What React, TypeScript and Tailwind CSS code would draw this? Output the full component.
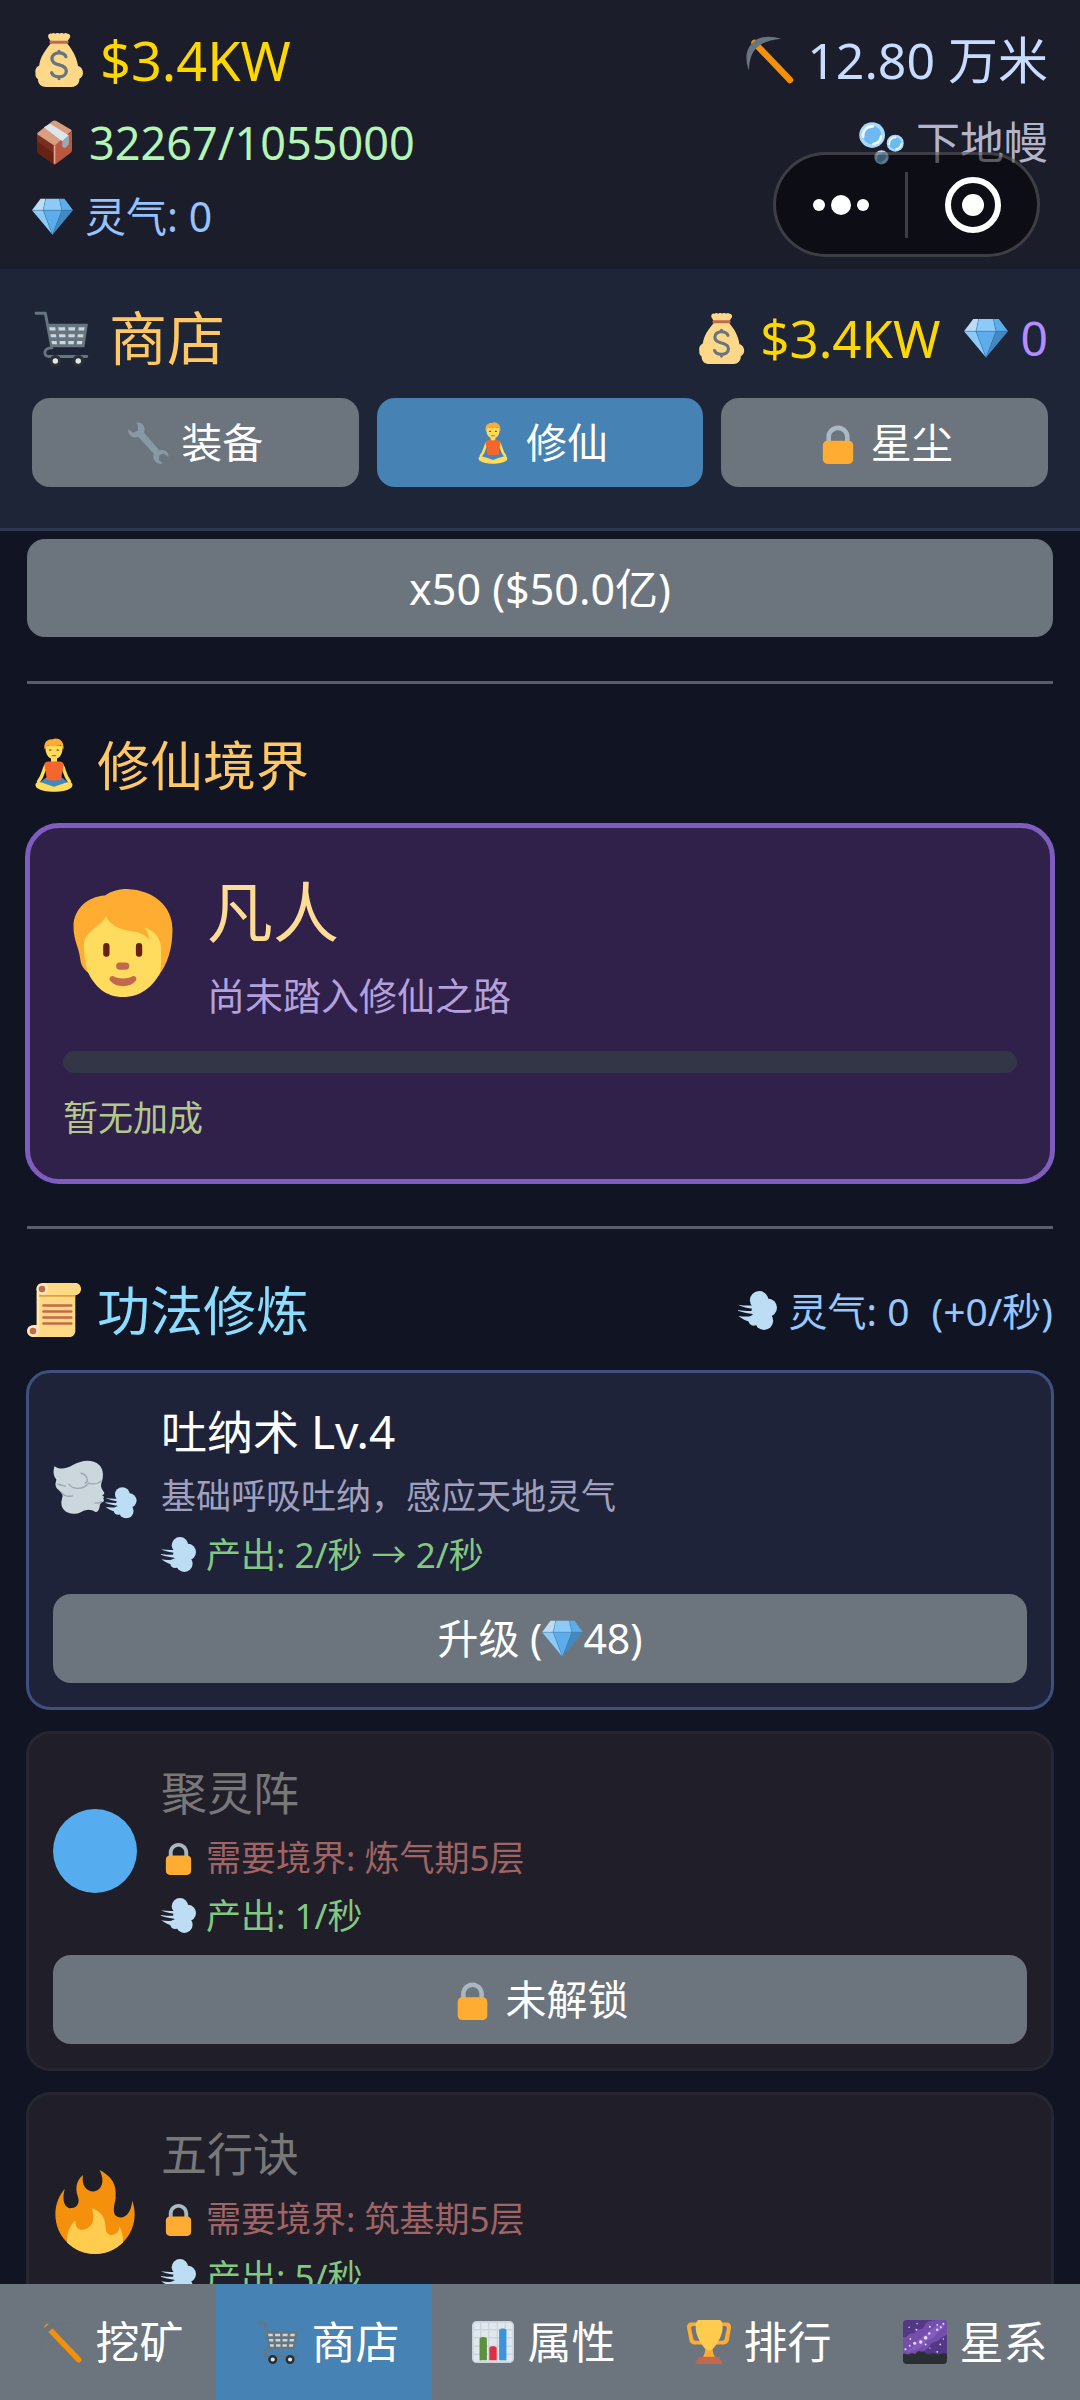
import type { ComponentType, ReactNode } from "react";

type IconProps = { className?: string };

export default function App() {
  return (
    <div className="flex h-screen flex-col bg-[#111523] font-['Noto_Sans','Noto_Sans_CJK_SC',sans-serif] text-white">
      <StatusBar />
      <ShopHeader />

      {/* Scrolling list */}
      <main className="min-h-0 flex-1 overflow-y-auto px-[27px] pt-[8px] [scrollbar-width:none]">
        <button className="h-[98px] w-full rounded-[18px] bg-[#6c757d] text-[43px] leading-none">
          x50 ($50.0亿)
        </button>

        <Divider />

        <section>
          <div className="mb-[20px] flex h-[80px] items-center gap-[16px]">
            <Lotus className="size-[54px]" />
            <h2 className="text-[53px] leading-none text-[#ffc864]">修仙境界</h2>
          </div>
          <RealmCard />
        </section>

        <Divider />

        <section>
          <div className="mb-[20px] flex h-[80px] items-center justify-between">
            <div className="flex items-center gap-[16px]">
              <Scroll className="size-[54px]" />
              <h2 className="text-[53px] leading-none text-[#8cdcff]">功法修炼</h2>
            </div>
            <div className="flex items-center text-[39px] leading-none text-[#96c8ff]">
              <Dash className="mr-[12px] size-[39px]" />
              <span>灵气: 0</span>
              <span className="ml-[22px]">(+0/秒)</span>
            </div>
          </div>
          <div className="-mx-px flex flex-col gap-[21px]">
            <SkillCard
              icon={WindFace}
              name="吐纳术 Lv.4"
              desc="基础呼吸吐纳，感应天地灵气"
              output="产出: 2/秒 → 2/秒"
            >
              升级 (<Gem className="size-[41px]" />48)
            </SkillCard>
            <SkillCard icon={BlueCircle} name="聚灵阵" need="需要境界: 炼气期5层" output="产出: 1/秒">
              <Lock className="mr-[13px] size-[41px]" />
              未解锁
            </SkillCard>
            <SkillCard icon={Fire} name="五行诀" need="需要境界: 筑基期5层" output="产出: 5/秒">
              <Lock className="mr-[13px] size-[41px]" />
              未解锁
            </SkillCard>
          </div>
        </section>
      </main>

      {/* Bottom nav */}
      <nav className="grid h-[116px] shrink-0 grid-cols-5 bg-[#6c757d]">
        <NavItem icon={Pickaxe} label="挖矿" />
        <NavItem icon={Cart} label="商店" active />
        <NavItem icon={Chart} label="属性" />
        <NavItem icon={Trophy} label="排行" />
        <NavItem icon={Galaxy} label="星系" />
      </nav>
    </div>
  );
}

function StatusBar() {
  return (
    <header className="relative shrink-0 bg-[#1b1d2b] px-[32px] pt-[19px] pb-[20px] leading-none">
      <div className="flex h-[82px] items-center justify-between">
        <div className="flex items-center gap-[14px] text-[54px] text-[#ffd700]">
          <MoneyBag className="size-[54px]" />
          <span>$3.4KW</span>
        </div>
        <div className="flex items-center gap-[12px] text-[50px] text-[#c8dcff]">
          <Pickaxe className="size-[50px]" />
          <span>12.80 万米</span>
        </div>
      </div>
      <div className="flex h-[82px] items-center justify-between">
        <div className="flex items-center gap-[12px] text-[45px] text-[#b4f5b4]">
          <Package className="size-[45px]" />
          <span>32267/1055000</span>
        </div>
        <div className="flex items-center gap-[12px] text-[44px] text-[#b4b4c8]">
          <Bubbles className="size-[45px]" />
          <span>下地幔</span>
        </div>
      </div>
      <div className="flex h-[66px] items-center gap-[12px] text-[41px] text-[#96c3ff]">
        <Gem className="size-[41px]" />
        <span>灵气: 0</span>
      </div>

      {/* Mini-program capsule, floats over the bar */}
      <div className="absolute top-[152px] right-[40px] flex h-[105px] w-[267px] items-center rounded-full border-[3px] border-white/20 bg-black/50">
        <button aria-label="更多" className="flex flex-1 items-center justify-center gap-[6px]">
          <span className="size-[12px] rounded-full bg-white" />
          <span className="size-[20px] rounded-full bg-white" />
          <span className="size-[12px] rounded-full bg-white" />
        </button>
        <span className="h-[66px] w-[3px] bg-white/20" />
        <button aria-label="关闭" className="flex flex-1 items-center justify-center">
          <span className="flex size-[56px] items-center justify-center rounded-full border-[6px] border-white">
            <span className="size-[22px] rounded-full bg-white" />
          </span>
        </button>
      </div>
    </header>
  );
}

function ShopHeader() {
  return (
    <section className="shrink-0 border-b-[3px] border-[#2b3850] bg-[#1d2536] px-[32px] pt-[24px] pb-[41px] leading-none">
      <div className="mb-[15px] flex h-[90px] items-center justify-between">
        <div className="flex items-center gap-[19px]">
          <Cart className="size-[58px]" />
          <h1 className="text-[58px] text-[#ffc864]">商店</h1>
        </div>
        <div className="flex items-center gap-[13px]">
          <MoneyBag className="size-[51px]" />
          <span className="text-[51px] text-[#ffd700]">$3.4KW</span>
          <Gem className="ml-[10px] size-[44px]" />
          <span className="text-[48px] text-[#b48cff]">0</span>
        </div>
      </div>
      <div className="grid grid-cols-3 gap-[18px]">
        <Tab icon={Wrench} label="装备" />
        <Tab icon={Lotus} label="修仙" active />
        <Tab icon={Lock} label="星尘" />
      </div>
    </section>
  );
}

function Tab({ icon: Icon, label, active }: { icon: ComponentType<IconProps>; label: string; active?: boolean }) {
  return (
    <button
      className={`flex h-[89px] items-center justify-center gap-[12px] rounded-[18px] text-[41px] leading-none ${
        active ? "bg-[#4682b4]" : "bg-[#6c757d]"
      }`}
    >
      <Icon className="size-[42px]" />
      {label}
    </button>
  );
}

function NavItem({ icon: Icon, label, active }: { icon: ComponentType<IconProps>; label: string; active?: boolean }) {
  return (
    <button
      className={`flex items-center justify-center gap-[13px] pl-[6px] text-[44px] leading-none ${active ? "bg-[#4682b4]" : ""}`}
    >
      <Icon className="size-[44px]" />
      {label}
    </button>
  );
}

function Divider() {
  return <hr className="mt-[44px] mb-[41px] h-[3px] border-0 bg-[#5a5e6b]" />;
}

function RealmCard() {
  return (
    <div className="-m-[2px] rounded-[34px] border-[5px] border-[#7e5dbe] bg-[#2f214a] px-[33px] pt-[33px] pb-[36px]">
      <div className="flex items-center gap-[24px]">
        <div className="flex w-[120px] shrink-0 justify-center">
          <Person className="size-[108px]" />
        </div>
        <div>
          <h3 className="mb-[4px] text-[66px] leading-[100px] text-[#ffdc96]">凡人</h3>
          <p className="text-[38px] leading-[60px] text-[#b4a0dc]">尚未踏入修仙之路</p>
        </div>
      </div>
      <div
        role="progressbar"
        aria-label="修炼进度"
        aria-valuenow={0}
        className="mt-[26px] h-[22px] rounded-full bg-[#323646]"
      />
      <p className="mt-[20px] text-[35px] leading-[50px] text-[#b4c88c]">暂无加成</p>
    </div>
  );
}

function SkillCard({
  icon: Icon,
  name,
  desc,
  need,
  output,
  children,
}: {
  icon: ComponentType<IconProps>;
  name: string;
  desc?: string;
  need?: string;
  output: string;
  children: ReactNode;
}) {
  return (
    <article
      className={`rounded-[24px] border-[3px] p-[24px] ${
        need ? "border-[#262631] bg-[#1f1e29]" : "border-[#3e5080] bg-[#1f2339]"
      }`}
    >
      <div className="flex items-center gap-[24px]">
        <Icon className="size-[84px]" />
        <div>
          <h3 className={`h-[70px] text-[46px] leading-[68px] ${need ? "text-[#787878]" : ""}`}>{name}</h3>
          {desc && <p className="h-[58px] text-[35px] leading-[58px] text-[#a0a0be]">{desc}</p>}
          {need && (
            <p className="flex h-[58px] items-center gap-[10px] text-[35px] leading-none text-[#a06464]">
              <Lock className="size-[35px]" />
              {need}
            </p>
          )}
          <p className="flex h-[58px] items-center gap-[10px] text-[35px] leading-none text-[#82c882]">
            <Dash className="size-[35px]" />
            {output}
          </p>
        </div>
      </div>
      <button className="mt-[11px] flex h-[89px] w-full items-center justify-center rounded-[18px] bg-[#6c757d] text-[41px] leading-none whitespace-pre">
        {children}
      </button>
    </article>
  );
}

/* ---------- Icons, all on a 36 grid ---------- */

function Svg({ className, children }: { className?: string; children: ReactNode }) {
  return (
    <svg viewBox="0 0 36 36" aria-hidden="true" className={`shrink-0 ${className ?? ""}`}>
      {children}
    </svg>
  );
}

function MoneyBag({ className }: IconProps) {
  return (
    <Svg className={className}>
      <path
        fill="#FDD888"
        d="M13 6.500L11 3.200C10.200 1.500 11.500 0 13 .5c.8-.6 1.900-.6 2.600 0 .8-.7 2-.7 2.800 0 .8-.7 2-.7 2.800 0 .8-.6 1.900-.6 2.400 0 1.500-.2 2.400 1.500 1.600 2.700L23 6.500c3 3.500 6.700 8.500 7.700 15.500 2.300.5 3.300 2.700 3.300 4.700 0 1.700-1 3.100-2.400 3.800.2 3-1.900 5.500-5.100 5.500h-17C6 36 3.800 33.700 4 30.800 2.700 29.800 2 28.300 2.400 27 1.700 24.500 2.900 22.400 4.800 21.600 5.500 16 9 11 13 6.500z"
      />
      <path fill="#C1694F" d="M12.500 5.200h11c1.300 0 1.300 2 0 2h-11c-1.300 0-1.300-2 0-2z" />
      <path
        fill="none"
        stroke="#67757F"
        strokeWidth="2.200"
        strokeLinecap="round"
        d="M22.600 15.800c-.6-1.600-2.500-2.600-4.600-2.600-2.800 0-4.700 1.600-4.700 3.900 0 2.500 2 3.400 4.800 4.100 3.100.8 4.800 1.700 4.800 4.100 0 2.500-2.100 3.900-4.900 3.900-2.300 0-4.300-1-4.900-2.700M18 12.200v1M18 29.200v1.200"
      />
    </Svg>
  );
}

function Pickaxe({ className }: IconProps) {
  return (
    <Svg className={className}>
      <path stroke="#F4900C" strokeWidth="4.600" strokeLinecap="round" d="M6.800 5.600l25.600 26.800" />
      <path fill="#66757F" d="M2.800 25.500C-.8 15.500 1.500 9 6 5 10.500.8 18 .2 26.300 2.700 18.500 3.400 12.500 5.200 8.700 8.800 4.900 12.500 3.200 17.500 2.800 25.500z" />
    </Svg>
  );
}

function Package({ className }: IconProps) {
  return (
    <Svg className={className}>
      <path fill="#7B2E1E" d="M4 10.500L18 20v16L5.500 26.800C4.400 26 4 25.300 4 24z" />
      <path fill="#B9583F" d="M32 9v14.800c0 1.200-.4 2-1.500 2.800L18 36V20z" />
      <path fill="#662113" d="M4 17l14 10v9L5.500 26.800C4.400 26 4 25.300 4 24z" />
      <path fill="#D99E82" d="M16.500.8c1-.6 2-.6 3 0L31 7.500c.9.5 1 1.200 0 1.900L18 20.500 5 12c-1-.7-1.200-1.500 0-2.300z" />
      <path fill="#DDE6EC" d="M9.500 5.800L14.500 3l15 9.300-5.300 4.700z" />
      <path fill="#99AAB5" d="M24.200 17l5.300-4.700v7.200l-3 2.800-2.300-.8z" />
      <path stroke="#E0A78F" strokeWidth="1.300" d="M18 20.500V35" />
    </Svg>
  );
}

function Gem({ className }: IconProps) {
  return (
    <Svg className={className}>
      <path fill="#BDDDF4" d="M7.500 2.500H12L9.800 12.500H0z" />
      <path fill="#8CCAF7" d="M12 2.500h12l2.200 10H9.800z" />
      <path fill="#5DADEC" d="M24 2.500h4.500l7.500 10h-9.800z" />
      <path fill="#8CCAF7" d="M0 12.500h9.800L18 34z" />
      <path fill="#5DADEC" d="M9.800 12.500h16.400L18 34z" />
      <path fill="#4289C1" d="M26.200 12.500H36L18 34z" />
      <path fill="none" stroke="#3B7DB0" strokeWidth=".4" d="M0 12.500h36M12 2.500l-2.200 10L18 34l8.200-21.500L24 2.500" />
    </Svg>
  );
}

function Bubbles({ className }: IconProps) {
  return (
    <Svg className={className}>
      {[
        [10.5, 12, 10.3],
        [29, 18.5, 6.8],
        [18, 29.8, 5.7],
      ].map(([cx, cy, r]) => (
        <g key={cx}>
          <circle cx={cx} cy={cy} r={r} fill="#A9D9FA" />
          <circle cx={cx} cy={cy} r={r * 0.72} fill="#6DB9F2" />
          <path
            fill="none"
            stroke="#F3FAFF"
            strokeWidth={r * 0.2}
            strokeLinecap="round"
            d={`M${cx - r * 0.7} ${cy + r * 0.15}a${r * 0.72} ${r * 0.72} 0 0 1 ${r * 0.75} ${-r * 0.82}M${cx + r * 0.7} ${cy + r * 0.1}a${r * 0.72} ${r * 0.72} 0 0 1 ${-r * 0.6} ${r * 0.6}`}
          />
        </g>
      ))}
    </Svg>
  );
}

function Cart({ className }: IconProps) {
  return (
    <Svg className={className}>
      <path
        fill="none"
        stroke="#66757F"
        strokeWidth="1.800"
        strokeLinecap="round"
        strokeLinejoin="round"
        d="M2.500 2.600h5.800l4 21.500c-5.500 0-5.500 5.400-1.600 5.400H34"
      />
      <path fill="#66757F" d="M9.300 9.200h25.400l-2.200 14.600H11.700z" />
      <g fill="#CCD6DD">
        <path d="M10.700 11.300h3.700l.3 2h-3.700zM16.300 11.300h4.200l.2 2h-4.200zM22.600 11.300h4.200l-.2 2h-4zM29 11.300h3.700l-.4 2h-3.500z" />
        <path d="M11.400 15.600h3.500l.2 2h-3.300zM16.700 15.600h4l.1 2h-3.900zM22.600 15.600h4l-.2 2h-3.800zM28.400 15.600H32l-.3 2h-3.500z" />
        <path d="M12.100 19.900h3.200l.2 2h-3zM17.100 19.900h3.700l.1 2h-3.600zM22.500 19.900h3.600l-.2 2h-3.400zM28 19.900h3.300l-.3 2h-3.200z" />
      </g>
      <g fill="#E1E8ED" stroke="#292F33" strokeWidth="2">
        <circle cx="14.500" cy="32.300" r="2.700" />
        <circle cx="28.700" cy="32.300" r="2.700" />
      </g>
    </Svg>
  );
}

function Wrench({ className }: IconProps) {
  return (
    <Svg className={className}>
      <path
        fill="#8899A6"
        d="M8 .6C13 -.4 16.300 4 14.600 9.200l13.200 15.300c3.500-1.500 8 .5 7.700 5.200l-4.300-2.800-3.600 1.600-.3 3.800 3.300 3.200c-5.300 1.300-9.300-3-7.700-8.200L9.600 12.700C5.500 14.500 1 12 .8 6.300l4.500 2.900 4-2 .2-3.800z"
      />
    </Svg>
  );
}

function Lotus({ className }: IconProps) {
  return (
    <Svg className={className}>
      <path fill="#FFDC5D" d="M16 12h4v4.500h-4z" />
      <path
        fill="none"
        stroke="#FFDC5D"
        strokeWidth="2.300"
        strokeLinecap="round"
        strokeLinejoin="round"
        d="M12.800 18c-2 3-1.500 6.500-5.100 11M23.200 18c2 3 1.500 6.500 5.100 11"
      />
      <path fill="#4289C1" d="M12.500 26.500h11l5 4L18 35 7.500 30.500z" />
      <path fill="#F4662C" d="M14 15.700h8c1.700 0 2.500 1 2.300 2.600-.3 2.700-1.600 6-1.100 9.300-3 1-7.500 1-10.400 0 .5-3.300-.8-6.600-1.100-9.300-.2-1.600.6-2.600 2.300-2.600z" />
      <path
        fill="#FFDC5D"
        d="M7 29.300c3.200 0 8 2.300 11 3.200 3-.9 7.800-3.200 11-3.200 2 1 1.500 3.200 0 4.200-3 2-8 2.500-11 2.300-3 .2-8-.3-11-2.300-1.500-1-2-3.200 0-4.200z"
      />
      <path fill="#FFDC5D" d="M12.300 5h11.400c.4 5-1.500 9-5.700 9s-6.100-4-5.700-9z" />
      <path fill="#FFAC33" d="M11.700 7.500C10.900 3 13.500.5 17 .8c4-1.500 8 1.200 7.300 6.700-1.300-1-1.300-2.500-2-3-2.500 1.200-6 1.200-8.500.5-.9.500-.9 1.700-2.100 2.500z" />
      <path stroke="#662113" strokeWidth=".8" strokeLinecap="round" d="M15 8h1M20 8h1" />
      <path stroke="#C1694F" strokeWidth=".9" strokeLinecap="round" d="M16.800 11.700h2.400" />
    </Svg>
  );
}

function Lock({ className }: IconProps) {
  return (
    <Svg className={className}>
      <path
        fill="#AAB8C2"
        d="M18 3C12.477 3 8 7.477 8 13v10h4V13c0-3.313 2.686-6 6-6s6 2.687 6 6v10h4V13c0-5.523-4.477-10-10-10z"
      />
      <path
        fill="#FFAC33"
        d="M31 32c0 2.209-1.791 4-4 4H9c-2.209 0-4-1.791-4-4V20c0-2.209 1.791-4 4-4h18c2.209 0 4 1.791 4 4v12z"
      />
    </Svg>
  );
}

function Person({ className }: IconProps) {
  return (
    <Svg className={className}>
      <path
        fill="#FFAC33"
        d="M12 2.200C14 .6 17 0 19.500 0 28 .4 34.500 5.500 34.500 13.500c0 6.500-1.700 11.500-4.700 15.500L6.500 28C4.500 26.500 3.900 25 3.700 23 3.300 19.500 1.500 17 1.500 12.500 1.500 7 6 2.500 12 2.200z"
      />
      <path
        fill="#FFDC5D"
        d="M12.400 9.200c1.300 3 4.500 4.300 8 4.800 2.700.4 4.500.8 6.300 2.800 0-1.700-.6-2.900-1.700-4 3.500.8 5.800 4 5.700 7.200-.1 3 .3 5-.4 8C28 32.500 24 36 18 36c-5.800 0-9.500-3.500-11.800-8.500C5.200 24 5 21 5 18.500 5 14.500 10.500 12.500 12.400 9.200z"
      />
      <rect x="11.400" y="18" width="2.100" height="4.600" rx="1" fill="#662113" />
      <rect x="22.300" y="18" width="2.100" height="4.600" rx="1" fill="#662113" />
      <rect x="15.700" y="24.500" width="4.400" height="2.400" rx="1.200" fill="#C1694F" />
      <path
        fill="#C1694F"
        d="M14.800 29.100c1.800 1 4.600 1 6.400 0 .9-.4 1.700.8 1 1.600-1.900 2.300-6.500 2.300-8.400 0-.7-.8.100-2 1-1.600z"
      />
    </Svg>
  );
}

function Scroll({ className }: IconProps) {
  return (
    <Svg className={className}>
      <path fill="#FFD983" d="M6.500 4h25.700v28c0 2.200-1.600 4-3.800 4H4V28h2.500z" />
      <path fill="#FFE8B6" d="M6.500 6h1.700v26c0 2.200-1.600 4-4 4S0 34.200 0 32s1.800-3.800 4-3.800h2.500z" />
      <path fill="#E39F3D" d="M8.200 7.500h24v1.700h-24z" />
      <path fill="#FFD983" d="M10.200 0H32.300C34.500 0 36 1.800 36 4s-1.500 4-3.700 4H10.200z" />
      <circle cx="10.200" cy="4" r="4" fill="#FFE8B6" />
      <circle cx="10" cy="4" r="2.200" fill="#C1694F" />
      <circle cx="4" cy="32" r="2.200" fill="#C1694F" />
      <path stroke="#C1694F" strokeWidth="1.800" strokeLinecap="round" d="M11 15h18.500M11 19h18.500M11 23h18.500M11 27h18.500" />
    </Svg>
  );
}

function DashShape() {
  return (
    <g fill="#BDDDF4">
      <circle cx="19.500" cy="8.500" r="8.500" />
      <circle cx="27.500" cy="15.500" r="8.500" />
      <circle cx="20.500" cy="18" r="8" />
      <circle cx="14.500" cy="27" r="5" />
      <circle cx="24" cy="27.500" r="8.500" />
      <path d="M0 12.600c5 .9 10 1 16 .6v3C10 16.200 5 15 0 12.600z" />
      <path d="M0 17.500c5 .8 10 1 16 .8v3C10 21.300 5 20 0 18.300z" />
      <path d="M.3 23c5 .8 10 .8 16-.2v4l-5 1.400C7.500 27.800 4 25.700.3 23z" />
    </g>
  );
}

function Dash({ className }: IconProps) {
  return (
    <Svg className={className}>
      <DashShape />
    </Svg>
  );
}

function WindFace({ className }: IconProps) {
  return (
    <Svg className={className}>
      <path
        fill="#CCD6DD"
        d="M.6 7.800C3 9.600 6 8.700 8.500 7.300c3-1.600 6-2.400 9-1.400 3.600 1.200 4.500 4.700 3.600 8-.6 1.600-.7 2.300-.2 3.600l1 1.600c.3.700-.3 1-.9 1.100.9.400 1.100 1 .5 1.500.6.500.5 1.200-.4 1.500-1.200.6-.9 1.500-1.300 2.700-.3 1-.9 1.700-1.600 1.500-1.600-1-3-1.300-4.700-.6-1.800.7-2.500 1.500-4.800 1.400-3-.2-5-1.900-5.100-4.300-.1-1.800.8-2.900.4-4.200-.9-1.500-2.600-1.900-2.900-3.700-.2-1.200.4-1.700.3-2.600C.1 12 0 10 .6 7.800z"
      />
      <path
        fill="none"
        stroke="#99AAB5"
        strokeWidth=".6"
        strokeLinecap="round"
        d="M6.800 15.500c1.500 2.200 6 2.700 8.400-.4 1.700.4 4.200.2 5.500-1M12 10.800c1.200.3 2.200 1 2.600 2.200.3 1-.1 1.700-.8 2M2 15.400c1.300.9 2.300.3 3.300 1M3.600 19c1 1.400 2.800 2 4.800 1.500M18 23.600c1 .1 2-.1 2.700-.5"
      />
      <g transform="translate(22.500 16.800) scale(.37)">
        <DashShape />
      </g>
    </Svg>
  );
}

function BlueCircle({ className }: IconProps) {
  return (
    <Svg className={className}>
      <circle cx="18" cy="18" r="18" fill="#55ACEE" />
    </Svg>
  );
}

function Fire({ className }: IconProps) {
  return (
    <Svg className={className}>
      <path
        fill="#F4900C"
        d="M35 19c0-2.062-.367-4.039-1.040-5.868-.46 5.389-3.333 8.157-6.335 6.868-2.812-1.208-.917-5.917-.777-8.164.236-3.809-.012-8.169-6.931-11.794 2.875 5.500.333 8.917-2.333 9.125-2.958.231-5.667-2.542-4.667-7.042-3.238 2.386-3.332 6.402-2.333 9 1.042 2.708-.042 4.958-2.583 5.208-2.840.280-4.418-3.041-2.963-8.333C2.520 10.965 1 14.805 1 19c0 9.389 7.611 17 17 17s17-7.611 17-17z"
      />
      <path
        fill="#FFCC4D"
        d="M28.394 23.999c.148 3.084-2.561 4.293-4.019 3.709-2.106-.843-1.541-2.291-2.083-5.291s-2.625-5.083-5.708-6c2.250 6.333-1.247 8.667-3.080 9.084-1.872.426-3.753-.001-3.968-4.007C7.352 23.668 6 26.676 6 30c0 .368.023.730.055 1.090C9.125 34.124 13.342 36 18 36s8.875-1.876 11.945-4.910c.032-.360.055-.722.055-1.090 0-2.187-.584-4.236-1.606-6.001z"
      />
    </Svg>
  );
}

function Chart({ className }: IconProps) {
  return (
    <Svg className={className}>
      <rect x="1" y="1" width="34" height="34" rx="3.500" fill="#E1E8ED" />
      <path stroke="#CCD6DD" strokeWidth="1.200" d="M8 1v34M14.500 1v34M21.500 1v34M28 1v34M1 8h34M1 14.500h34M1 21.500h34M1 28h34" />
      <rect x="1.600" y="1.600" width="32.800" height="32.800" rx="3" fill="none" stroke="#CCD6DD" strokeWidth="1.200" />
      <path fill="#5C913B" d="M7 33V15.500c0-2 6-2 6 0V33z" />
      <path fill="#DD2E44" d="M15 33V23c0-2 6-2 6 0v10z" />
      <path fill="#3B94D9" d="M23 33V8.500c0-2 6-2 6 0V33z" />
    </Svg>
  );
}

function Trophy({ className }: IconProps) {
  return (
    <Svg className={className}>
      <path
        fill="#FFAC33"
        d="M5.123 5h6C12.227 5 13 4.896 13 6V4c0-1.104-.773-2-1.877-2h-8c-2 0-3.583 2.125-3 5 0 0 1.791 9.375 1.917 9.958C2.373 18.500 4.164 20 6.081 20h6.958c1.105 0-.039-1.896-.039-3v-2c0 1.104-.773 2-1.877 2h-4c-1.104 0-1.833-1.042-2-2S3.539 7.667 3.539 7.667C3.206 5.750 4.018 5 5.123 5zm25.812 0h-6C23.831 5 22 4.896 22 6V4c0-1.104 1.831-2 2.935-2h8c2 0 3.584 2.125 3 5 0 0-1.633 9.419-1.771 10-.354 1.500-2.042 3-4 3h-7.146C21.914 20 22 18.104 22 17v-2c0 1.104 1.831 2 2.935 2h4c1.104 0 1.834-1.042 2-2s1.584-7.333 1.584-7.333C32.851 5.750 32.040 5 30.935 5zM20.832 22c0-6.958-2.709 0-2.709 0s-3-6.958-3 0-3.291 10-3.291 10h12.292c-.001 0-3.292-3.042-3.292-10z"
      />
      <path
        fill="#FFCC4D"
        d="M29.123 6.577c0 6.775-6.770 18.423-11 18.423-4.231 0-11-11.649-11-18.423C7.123.877 8.500 0 10.318 0h15.404c1.900 0 3.401.6 3.401 6.577z"
      />
      <path
        fill="#C1694F"
        d="M27 33c0 1.104.227 2-.877 2h-16C9.018 35 9 34.104 9 33v-1c0-1.104 1.164-2 2.206-2h13.917c1.042 0 1.877.896 1.877 2v1z"
      />
      <path
        fill="#C1694F"
        d="M29 34.625c0 .76.165 1.375-1.252 1.375H8.498C7.206 36 7 35.385 7 34.625v-.25C7 33.615 7.738 33 8.498 33h19.250c.759 0 1.252.615 1.252 1.375v.25z"
      />
    </Svg>
  );
}

function Galaxy({ className }: IconProps) {
  return (
    <Svg className={className}>
      <path fill="#553788" d="M3 0h30c2 0 3 1 3 3v28H0V3c0-2 1-3 3-3z" />
      <path fill="#744EAA" d="M18 4c2-4 8-4 15-4 2 0 3 1 3 3v9c-3 2-4 1-6 4-3 3-6 1-8 5-3 5-8 5-11 8H0V14c4 1 3-3 7-3 4 0 5-4 9-4z" />
      <path fill="#9266CC" d="M24 7c5-4 9-3 11-5-1 5-6 7-8 10-4 5-7 3-10 8-4 5-9 4-14 7 2-4 5-4 7-8 3-4 8-6 14-12z" opacity=".55" />
      <g fill="#E9DBFA">
        <circle cx="18.500" cy="14.500" r="1.500" />
        <circle cx="14.500" cy="18" r="1.400" />
        <circle cx="9.500" cy="19" r="1.300" />
        <circle cx="21.500" cy="11" r="1" />
        <circle cx="28" cy="8" r="1" />
        <circle cx="31" cy="6" r=".9" />
        <circle cx="33" cy="3" r=".8" />
        <circle cx="28" cy="4" r=".7" />
        <circle cx="22" cy="5.500" r=".8" />
        <circle cx="11" cy="8" r=".8" />
        <circle cx="5" cy="6" r=".6" />
        <circle cx="11.500" cy="3" r=".6" />
        <circle cx="5.500" cy="21" r=".8" />
        <circle cx="2" cy="24" r=".9" />
        <circle cx="6" cy="15.500" r=".7" />
        <circle cx="18.500" cy="20" r=".8" />
        <circle cx="30.500" cy="20" r=".7" />
        <circle cx="28" cy="26" r=".7" />
        <circle cx="22" cy="23" r=".6" />
        <circle cx="33" cy="15.500" r=".6" />
      </g>
      <path fill="#292F33" d="M0 28c2-1 3 1 5 0s3-1 5 0c2-3 3-3 5-2 2-1 3 1 5 2 3 0 4-2 7 0 3 1 5-2 9 0v5c0 2-1 3-3 3H3c-2 0-3-1-3-3z" />
    </Svg>
  );
}
